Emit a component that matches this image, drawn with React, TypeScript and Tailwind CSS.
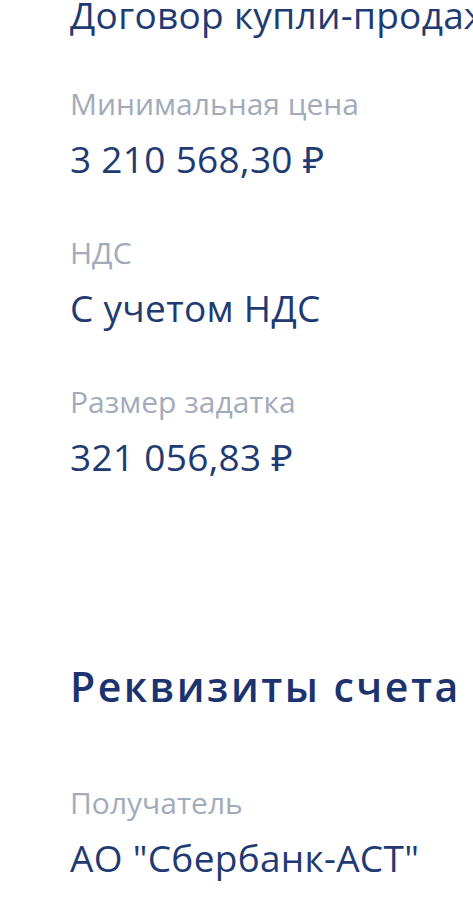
const fields = [
  { label: "Минимальная цена", value: "3 210 568,30 ₽" },
  { label: "НДС", value: "С учетом НДС" },
  { label: "Размер задатка", value: "321 056,83 ₽" },
];

function Field({ label, value }: { label: string; value: string }) {
  return (
    <div className="flex flex-col">
      <div className="text-[30px] leading-[40px] text-[#a3abbb] whitespace-nowrap">
        {label}
      </div>
      <div className="mt-[13px] text-[37px] leading-[44px] tracking-[0.3px] text-[#223a72] whitespace-nowrap">
        {value}
      </div>
    </div>
  );
}

export default function App() {
  return (
    <div
      className="w-[473px] h-[909px] overflow-hidden bg-white pl-[70px]"
      style={{ fontFamily: '"Open Sans", "Noto Sans", sans-serif' }}
    >
      <div className="mt-[-7px] text-[37px] leading-[44px] tracking-[0.3px] text-[#223a72] whitespace-nowrap">
        Договор купли-продажи
      </div>
      <div className="mt-[47px] flex flex-col gap-[52px]">
        {fields.map((f) => (
          <Field key={f.label} label={f.label} value={f.value} />
        ))}
      </div>
      <h2 className="mt-[185px] text-[41px] leading-[44px] font-semibold tracking-[2.5px] text-[#1c3370] whitespace-nowrap">
        Реквизиты счета
      </h2>
      <div className="mt-[75px]">
        <Field label="Получатель" value='АО "Сбербанк-АСТ"' />
      </div>
    </div>
  );
}
